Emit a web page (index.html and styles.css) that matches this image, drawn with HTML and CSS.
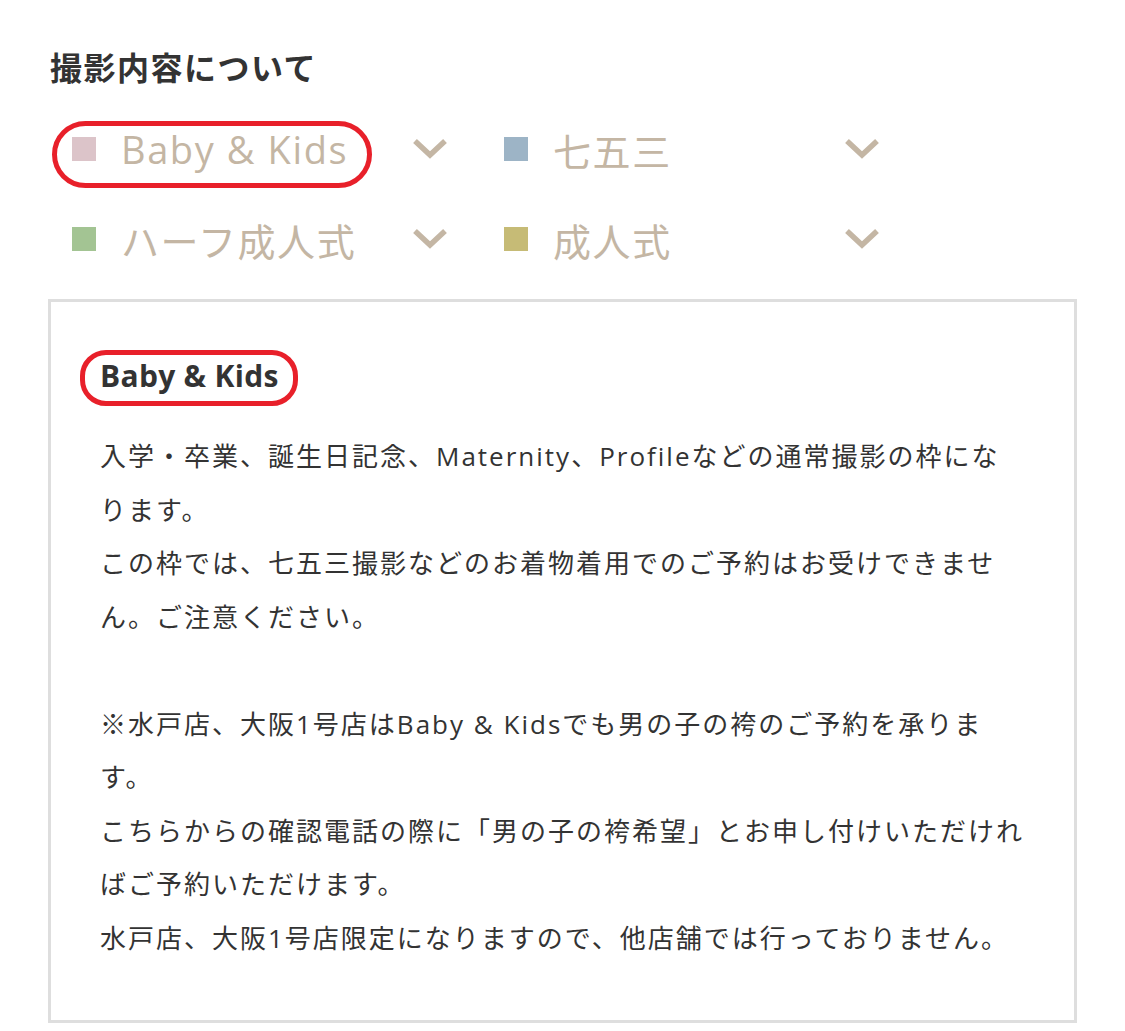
FILE: index.html
```html
<!DOCTYPE html>
<html lang="ja">

<head>
    <meta charset="UTF-8">
    <meta name="viewport" content="width=device-width, initial-scale=1.0">
    <title>撮影内容について</title>
    <link rel="stylesheet" href="styles.css">
</head>

<body>
    <div class="section">
        <h2 class="section-title">撮影内容について</h2>

        <div class="tabs">
            <div class="tab marked">
                <span class="swatch sw-pink"></span>
                <span class="tab-label">Baby &amp; Kids</span>
                <svg class="chevron" viewBox="0 0 36 22"><path d="M3 3 L18 17 L33 3" /></svg>
            </div>
            <div class="tab">
                <span class="swatch sw-blue"></span>
                <span class="tab-label">七五三</span>
                <svg class="chevron" viewBox="0 0 36 22"><path d="M3 3 L18 17 L33 3" /></svg>
            </div>
            <div class="tab">
                <span class="swatch sw-green"></span>
                <span class="tab-label">ハーフ成人式</span>
                <svg class="chevron" viewBox="0 0 36 22"><path d="M3 3 L18 17 L33 3" /></svg>
            </div>
            <div class="tab">
                <span class="swatch sw-yellow"></span>
                <span class="tab-label">成人式</span>
                <svg class="chevron" viewBox="0 0 36 22"><path d="M3 3 L18 17 L33 3" /></svg>
            </div>
        </div>

        <div class="detail">
            <h3 class="detail-title"><span class="marked">Baby &amp; Kids</span></h3>
            <p class="detail-text">入学・卒業、誕生日記念、Maternity、Profileなどの通常撮影の枠になります。<br>この枠では、七五三撮影などのお着物着用でのご予約はお受けできません。ご注意ください。<br><br>※水戸店、大阪1号店はBaby &amp; Kidsでも男の子の袴のご予約を承ります。<br>こちらからの確認電話の際に「男の子の袴希望」とお申し付けいただければご予約いただけます。<br>水戸店、大阪1号店限定になりますので、他店舗では行っておりません。</p>
        </div>
    </div>
</body>

</html>
```

FILE: styles.css
```css
*,
*::before,
*::after {
    margin: 0;
    padding: 0;
    box-sizing: border-box;
}

body {
    background: #fff;
    font-family: "Open Sans", "Noto Sans CJK JP", sans-serif;
    color: #333;
}

.section {
    width: 1077px;
    padding: 46px 0 0 48px;
}

.section-title {
    font-size: 32px;
    font-weight: bold;
    letter-spacing: 1.5px;
    line-height: 44px;
    color: #333;
    padding-left: 2px;
}

/* tabs */

.tabs {
    display: grid;
    grid-template-columns: repeat(2, 432px);
    grid-auto-rows: 90px;
    margin-top: 16px;
}

.tab {
    display: flex;
    align-items: center;
    padding-left: 24px;
    padding-right: 32px;
    padding-bottom: 4px;
    position: relative;
}

.swatch {
    width: 24px;
    height: 24px;
    flex-shrink: 0;
    margin-right: 25px;
}

.sw-pink { background: #dcc4c9; }
.sw-blue { background: #9db4c6; }
.sw-green { background: #a3c493; }
.sw-yellow { background: #c6bb76; }

.tab-label {
    flex: 1;
    font-size: 38px;
    letter-spacing: 1.6px;
    color: #c4b6a4;
    white-space: nowrap;
}

.chevron {
    width: 36px;
    height: 22px;
    fill: none;
    stroke: #c4b6a4;
    stroke-width: 5.5;
}

/* red marker rings */

.marked {
    position: relative;
}

.tab.marked::after {
    content: "";
    position: absolute;
    left: 4px;
    top: 15px;
    width: 320px;
    height: 67px;
    border: 5px solid #e8202a;
    border-radius: 34px;
}

.detail-title .marked::after {
    content: "";
    position: absolute;
    left: -20px;
    top: -5px;
    right: -19px;
    bottom: -10px;
    border: 5px solid #e8202a;
    border-radius: 26px;
}

/* detail box */

.detail {
    width: 1029px;
    margin-top: 13px;
    border: 3px solid #dedede;
    padding: 54px 47px 55px 49px;
}

.detail-title {
    font-size: 30px;
    font-weight: bold;
    line-height: 40px;
    letter-spacing: 0.3px;
    color: #333;
}

.detail-text {
    margin-top: 34px;
    font-size: 26px;
    letter-spacing: 2px;
    line-height: 53.5px;
    color: #333;
}
```
